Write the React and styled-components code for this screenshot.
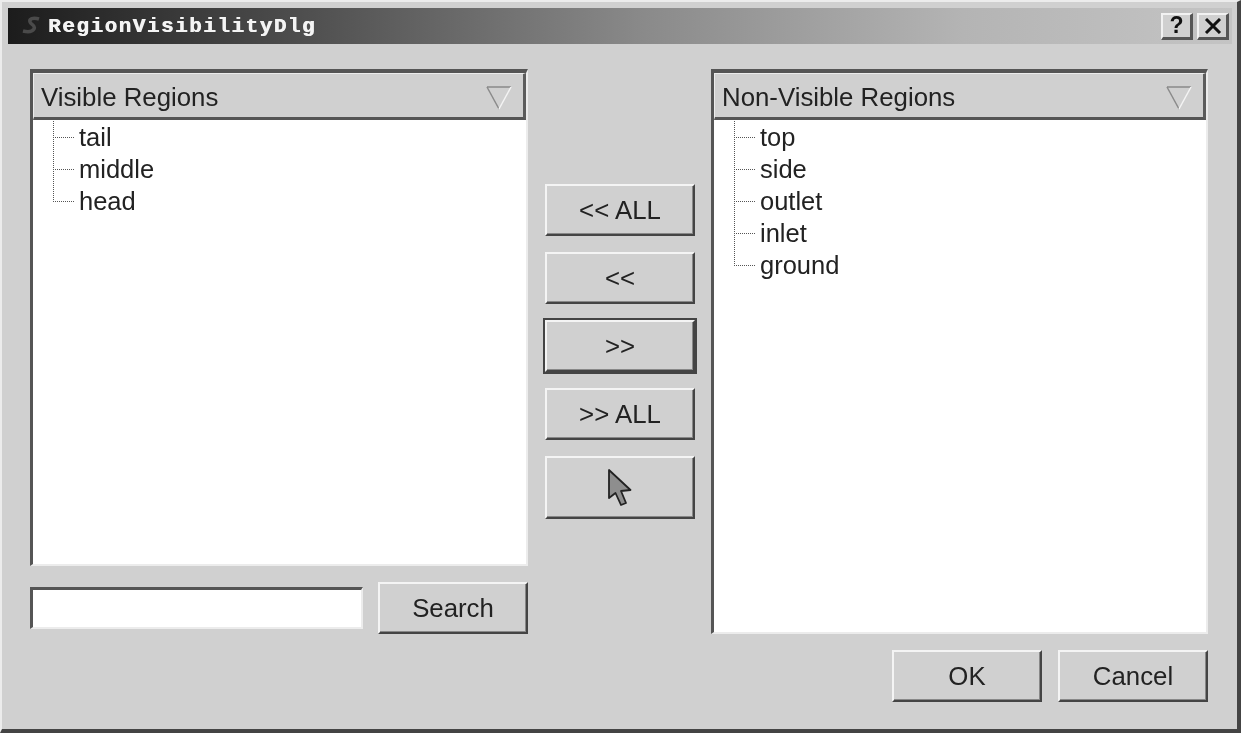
import React from "react";
import styled, { createGlobalStyle } from "styled-components";

const GlobalStyle = createGlobalStyle`
  html, body {
    margin: 0;
    padding: 0;
    background: #d0d0d0;
  }
  * {
    box-sizing: border-box;
  }
`;

const Dialog = styled.div`
  width: 1241px;
  height: 733px;
  padding: 6px 5px 0 6px;
  background: #d0d0d0;
  border-style: solid;
  border-width: 2px 4px 4px 2px;
  border-color: #ececec #444 #444 #ececec;
  font-family: "Liberation Sans", Arial, sans-serif;
  color: #222;
  overflow: hidden;
  filter: blur(0.4px);
`;

const TitleBar = styled.div`
  height: 36px;
  display: flex;
  align-items: center;
  padding: 0 3px 0 13px;
  background: linear-gradient(to right, #1c1c1c 0%, #4a4a4a 22%, #8a8a8a 52%, #b4b4b4 78%, #c4c4c4 100%);
`;

const TitleText = styled.span`
  margin-left: 5px;
  flex: 1;
  font-family: "Liberation Mono", monospace;
  font-weight: 700;
  font-size: 21px;
  letter-spacing: 1.5px;
  color: #f4f4f4;
  text-shadow: 0.6px 0 #f4f4f4;
`;

const CaptionButton = styled.div`
  width: 32px;
  height: 27px;
  margin-left: 4px;
  display: flex;
  align-items: center;
  justify-content: center;
  background: #d0d0d0;
  border-style: solid;
  border-width: 2px 3px 3px 2px;
  border-color: #f2f2f2 #555 #555 #f2f2f2;
  font-weight: 700;
  font-size: 23px;
  color: #111;
`;

const Content = styled.div`
  display: grid;
  grid-template-columns: 498px 150px 498px;
  column-gap: 16px;
  margin: 25px 0 0 22px;
`;

const LeftColumn = styled.div`
  display: flex;
  flex-direction: column;
  gap: 16px;
`;

const MiddleColumn = styled.div`
  display: flex;
  flex-direction: column;
  gap: 16px;
  padding-top: 115px;
  margin-left: 1px;
`;

const RightColumn = styled.div`
  display: flex;
  flex-direction: column;
  gap: 16px;
  padding-left: 1px;
`;

const Panel = styled.div`
  height: ${(p) => p.$height}px;
  background: #fff;
  border-style: solid;
  border-width: 4px 2px 2px 3px;
  border-color: #555 #ececec #ececec #555;
`;

const PanelHeader = styled.div`
  height: 47px;
  display: flex;
  align-items: center;
  justify-content: space-between;
  padding: 3px 11px 0 7px;
  background: #d0d0d0;
  border-style: solid;
  border-width: 1px 3px 3px 1px;
  border-color: #ececec #5c5c5c #555 #ececec;
  font-size: 25.8px;
`;

const TreeList = styled.ul`
  list-style: none;
  margin: 0;
  padding: 1px 0 0 20px;
`;

const TreeRow = styled.li`
  height: 32px;
  display: flex;
  font-size: 25.5px;
  line-height: 32px;
`;

const Connector = styled.span`
  width: 21px;
  margin-right: 5px;
  background:
    repeating-linear-gradient(to bottom, #555 0 1px, transparent 1px 2px) left top / 1px ${(p) => (p.$last ? "50%" : "100%")} no-repeat,
    repeating-linear-gradient(to right, #555 0 1px, transparent 1px 2px) left center / 100% 1px no-repeat;
`;

const SearchRow = styled.div`
  display: flex;
  align-items: center;
  gap: 15px;
`;

const SearchInput = styled.div`
  width: 333px;
  height: 42px;
  background: #fff;
  border-style: solid;
  border-width: 3px 2px 2px 3px;
  border-color: #555 #ececec #ececec #555;
`;

const Button = styled.div`
  width: 150px;
  height: ${(p) => p.$height || 52}px;
  display: flex;
  align-items: center;
  justify-content: center;
  padding-top: ${(p) => (p.$icon ? "0" : "1px")};
  background: #d0d0d0;
  border-style: solid;
  border-width: 2px;
  border-color: #f4f4f4 #444 #444 #f4f4f4;
  box-shadow: inset -1px -1px 0 #888${(p) => (p.$primary ? ", 0 0 0 2px #444" : "")};
  font-size: 25.8px;
`;

const Footer = styled.div`
  display: flex;
  justify-content: flex-end;
  gap: 16px;
`;

function FilterTriangle() {
  return (
    <svg width="26" height="25" viewBox="0 0 26 25">
      <path d="M1 2 H25" stroke="#8a8a8a" strokeWidth="1.5" fill="none" />
      <path d="M1 2 L13 24" stroke="#8a8a8a" strokeWidth="1.5" fill="none" />
      <path d="M25 2 L13 24" stroke="#f4f4f4" strokeWidth="1.5" fill="none" />
    </svg>
  );
}

function AppLogo() {
  return (
    <svg width="22" height="20" viewBox="0 0 22 20">
      <path d="M18 3 C12 1 8 3 9 6 C10 9 15 9 13 13 C11 16 6 16 2 15" stroke="#4a4a4a" strokeWidth="3.5" fill="none" />
    </svg>
  );
}

function CloseGlyph() {
  return (
    <svg width="18" height="16" viewBox="0 0 18 16">
      <path d="M2 1 L16 15 M16 1 L2 15" stroke="#111" strokeWidth="3" fill="none" />
    </svg>
  );
}

function ArrowCursor() {
  return (
    <svg width="24" height="38" viewBox="0 0 24 38">
      <path d="M1 1 V29 L7.5 24 L13 36 L18 34 L13 22 L22.5 21 Z" fill="#8e8e8e" stroke="#222" strokeWidth="1.8" strokeLinejoin="round" />
    </svg>
  );
}

function RegionPanel({ title, height, items }) {
  return (
    <Panel $height={height}>
      <PanelHeader>
        {title}
        <FilterTriangle />
      </PanelHeader>
      <TreeList>
        {items.map((item, i) => (
          <TreeRow key={item}>
            <Connector $last={i === items.length - 1} />
            {item}
          </TreeRow>
        ))}
      </TreeList>
    </Panel>
  );
}

export default function App() {
  return (
    <Dialog>
      <GlobalStyle />
      <TitleBar>
        <AppLogo />
        <TitleText>RegionVisibilityDlg</TitleText>
        <CaptionButton>?</CaptionButton>
        <CaptionButton>
          <CloseGlyph />
        </CaptionButton>
      </TitleBar>
      <Content>
        <LeftColumn>
          <RegionPanel title="Visible Regions" height={497} items={["tail", "middle", "head"]} />
          <SearchRow>
            <SearchInput />
            <Button>Search</Button>
          </SearchRow>
        </LeftColumn>
        <MiddleColumn>
          <Button>&lt;&lt; ALL</Button>
          <Button>&lt;&lt;</Button>
          <Button $primary>&gt;&gt;</Button>
          <Button>&gt;&gt; ALL</Button>
          <Button $height={63} $icon>
            <ArrowCursor />
          </Button>
        </MiddleColumn>
        <RightColumn>
          <RegionPanel title="Non-Visible Regions" height={565} items={["top", "side", "outlet", "inlet", "ground"]} />
          <Footer>
            <Button>OK</Button>
            <Button>Cancel</Button>
          </Footer>
        </RightColumn>
      </Content>
    </Dialog>
  );
}
